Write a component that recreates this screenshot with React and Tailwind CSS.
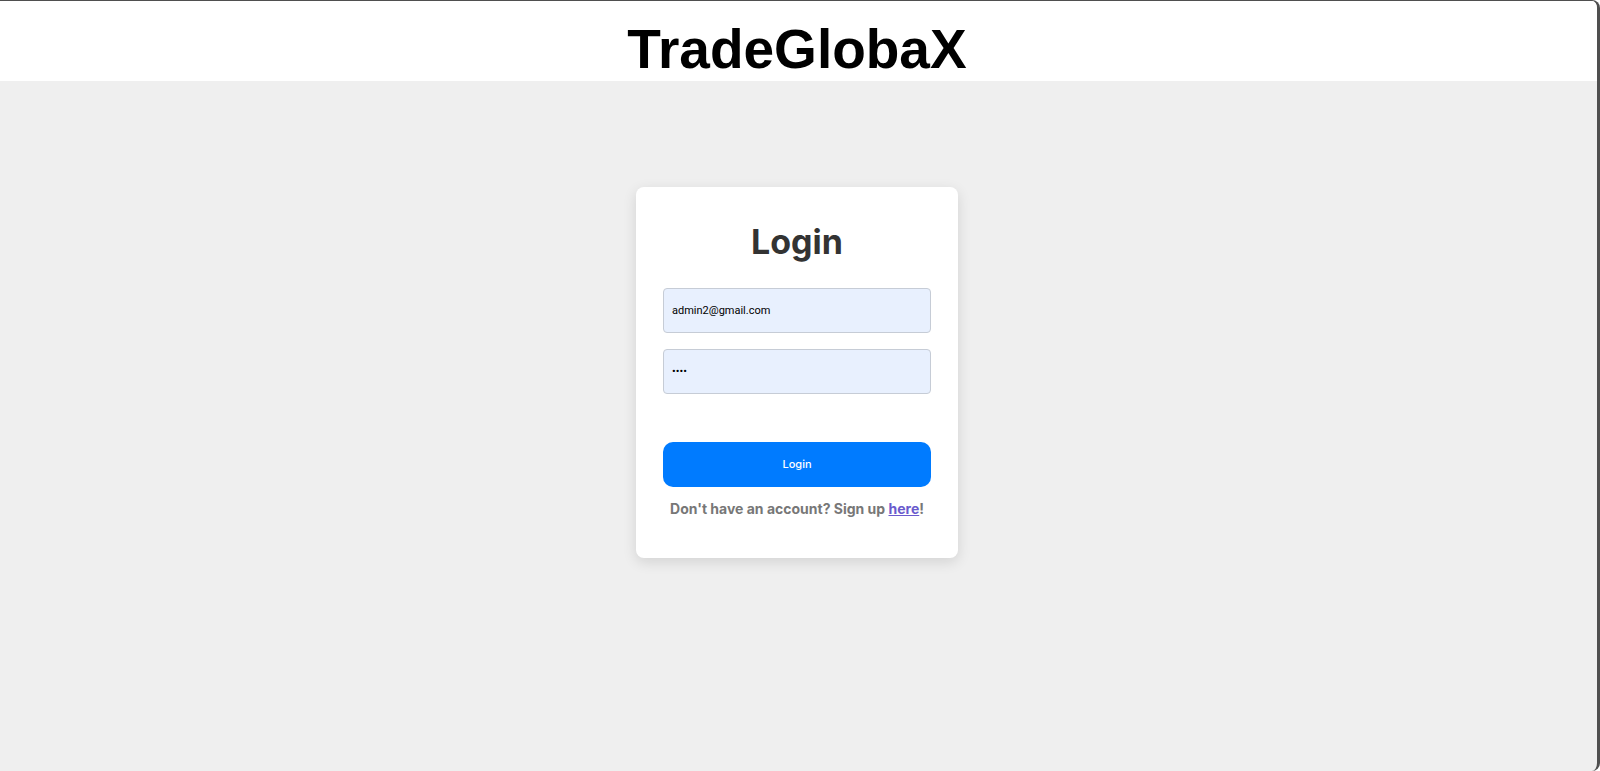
import React from "react";

export default function App() {
  return (
    <div className="w-full h-[771px] bg-white">
      <div className="h-full flex flex-col border-t border-r-[3px] border-[#4f4f4f] rounded-tr-[8px] rounded-br-[8px] overflow-hidden bg-[#efefef]">
        <header className="h-[80px] shrink-0 bg-white flex justify-center pr-[3px]">
          <h1
            className="pt-[16px] text-[55px] leading-[64px] font-bold text-black"
            style={{ fontFamily: '"Liberation Sans", Arial, sans-serif' }}
          >
            TradeGlobaX
          </h1>
        </header>
        <main className="flex-1 flex justify-center pt-[106px] pr-[3px]">
          <div
            className="w-[322px] h-[371px] bg-white rounded-[8px] shadow-[0_4px_14px_rgba(0,0,0,0.12)] px-[27px] pt-[34px] flex flex-col"
            style={{ fontFamily: 'Inter, "Noto Sans", sans-serif' }}
          >
            <h2 className="text-center text-[34px] leading-[41px] font-bold text-[#333333]">
              Login
            </h2>
            <input
              type="email"
              readOnly
              defaultValue="admin2@gmail.com"
              className="mt-[26px] h-[45px] w-full rounded-[4px] border border-[#c6ccd6] bg-[#e8f0fe] px-[8px] text-[11px] text-black outline-none"
              style={{ fontFamily: 'Roboto, Arial, sans-serif' }}
            />
            <input
              type="password"
              readOnly
              defaultValue="abcd"
              className="mt-[16px] h-[45px] w-full rounded-[4px] border border-[#c6ccd6] bg-[#e8f0fe] px-[8px] text-[11px] text-black outline-none"
              style={{ fontFamily: 'Roboto, Arial, sans-serif' }}
            />
            <button className="mt-[48px] h-[45px] w-full rounded-[10px] bg-[#007bff] text-white text-[11px] font-medium">
              Login
            </button>
            <p className="mt-[13px] text-center text-[14px] leading-[17px] font-bold text-[#777777]">
              Don't have an account? Sign up{" "}
              <a href="#" className="text-[#6a5acd] underline">
                here
              </a>
              !
            </p>
          </div>
        </main>
      </div>
    </div>
  );
}
